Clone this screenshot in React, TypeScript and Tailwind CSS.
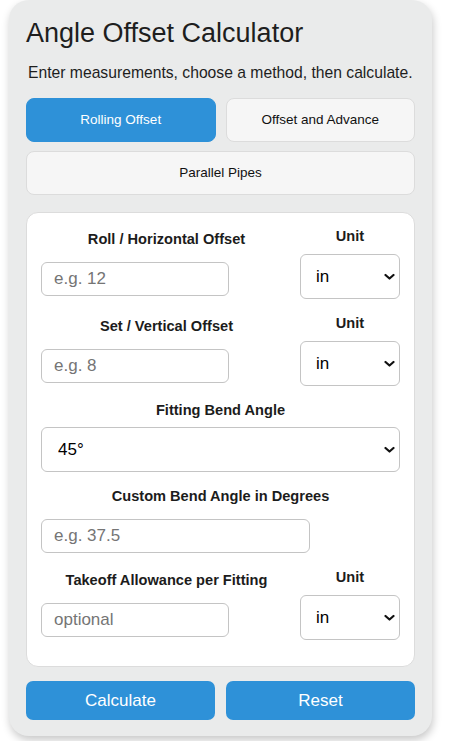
import { useState } from 'react'

const units = ['in', 'ft', 'mm', 'cm', 'm']

function Chevron() {
  return (
    <svg className="pointer-events-none absolute right-[5px] top-1/2 -translate-y-1/2" width="11" height="7" viewBox="0 0 11 7" fill="none">
      <path d="M1.5 1.5 L5.5 5 L9.5 1.5" stroke="#111" strokeWidth="2.2" strokeLinecap="round" strokeLinejoin="round" />
    </svg>
  )
}

function Select({ value, options, onChange, className = '' }: { value: string; options: string[]; onChange: (v: string) => void; className?: string }) {
  return (
    <div className={`relative ${className}`}>
      <select
        value={value}
        onChange={e => onChange(e.target.value)}
        className="h-[45px] w-full appearance-none rounded-md border border-[#c4c4c4] bg-white pl-[15px] text-[17px] text-black outline-none"
      >
        {options.map(o => <option key={o} value={o}>{o}</option>)}
      </select>
      <Chevron />
    </div>
  )
}

function TextInput({ placeholder, className = 'w-3/4' }: { placeholder: string; className?: string }) {
  return (
    <input
      type="text"
      placeholder={placeholder}
      className={`h-[34px] rounded-md border border-[#c4c4c4] bg-white pl-3 text-[17px] text-black outline-none placeholder:text-[#757575] ${className}`}
    />
  )
}

function Label({ children, mb }: { children: string; mb: string }) {
  return <p className={`text-center text-[14.6px] font-bold leading-[17px] text-[#1c1c1c] ${mb}`}>{children}</p>
}

function UnitRow({ label, placeholder, unit, setUnit }: { label: string; placeholder: string; unit: string; setUnit: (v: string) => void }) {
  return (
    <div className="grid grid-cols-[1fr_100px] items-center gap-x-2">
      <div className="flex flex-col">
        <Label mb="mb-[14px]">{label}</Label>
        <TextInput placeholder={placeholder} />
      </div>
      <div className="flex flex-col">
        <Label mb="mb-[9px]">Unit</Label>
        <Select value={unit} options={units} onChange={setUnit} />
      </div>
    </div>
  )
}

export default function App() {
  const [mode, setMode] = useState('rolling')
  const [rollUnit, setRollUnit] = useState('in')
  const [setUnitV, setSetUnitV] = useState('in')
  const [takeoffUnit, setTakeoffUnit] = useState('in')
  const [angle, setAngle] = useState('45°')

  const tab = (key: string) =>
    key === mode
      ? 'bg-[#2e91d8] border-[#2e91d8] text-white'
      : 'bg-[#f6f6f6] border-[#dcdcdc] text-[#111]'

  return (
    <main className="min-h-screen bg-white font-['Liberation_Sans',Arial,sans-serif]">
      <div className="ml-[9px] w-[423px] rounded-[20px] bg-[#eaebeb] px-[17px] pt-[17px] pb-[16px] shadow-[1px_4px_8px_rgba(0,0,0,0.22)]">
        <h1 className="text-[27px] leading-[32px] text-[#1e1e1e]">Angle Offset Calculator</h1>
        <p className="mt-[14px] whitespace-nowrap pl-[2px] text-[15.7px] leading-[20px] text-[#1e1e1e]">
          Enter measurements, choose a method, then calculate.
        </p>

        <div className="mt-[15px] grid grid-cols-2 gap-x-[10px] gap-y-[9px]">
          <button onClick={() => setMode('rolling')} className={`h-[44px] rounded-lg border text-[13.5px] ${tab('rolling')}`}>Rolling Offset</button>
          <button onClick={() => setMode('advance')} className={`h-[44px] rounded-lg border text-[13.5px] ${tab('advance')}`}>Offset and Advance</button>
          <button onClick={() => setMode('parallel')} className={`col-span-2 h-[44px] rounded-lg border text-[13.5px] ${tab('parallel')}`}>Parallel Pipes</button>
        </div>

        <div className="mt-[17px] flex flex-col gap-4 rounded-xl border border-[#dcdcdc] bg-white px-[14px] pt-[15px] pb-[26px]">
          <UnitRow label="Roll / Horizontal Offset" placeholder="e.g. 12" unit={rollUnit} setUnit={setRollUnit} />
          <UnitRow label="Set / Vertical Offset" placeholder="e.g. 8" unit={setUnitV} setUnit={setSetUnitV} />

          <div className="flex flex-col">
            <Label mb="mb-[8px]">Fitting Bend Angle</Label>
            <Select value={angle} options={['22.5°', '30°', '45°', '60°', '90°', 'Custom']} onChange={setAngle} className="[&_select]:pl-[16px]" />
          </div>

          <div className="flex flex-col">
            <Label mb="mb-[14px]">Custom Bend Angle in Degrees</Label>
            <TextInput placeholder="e.g. 37.5" />
          </div>

          <UnitRow label="Takeoff Allowance per Fitting" placeholder="optional" unit={takeoffUnit} setUnit={setTakeoffUnit} />
        </div>

        <div className="mt-[14px] flex gap-[11px]">
          <button className="h-[39px] flex-1 rounded-[7px] bg-[#2e91d8] text-[17px] text-white">Calculate</button>
          <button className="h-[39px] flex-1 rounded-[7px] bg-[#2e91d8] text-[17px] text-white">Reset</button>
        </div>
      </div>
    </main>
  )
}
